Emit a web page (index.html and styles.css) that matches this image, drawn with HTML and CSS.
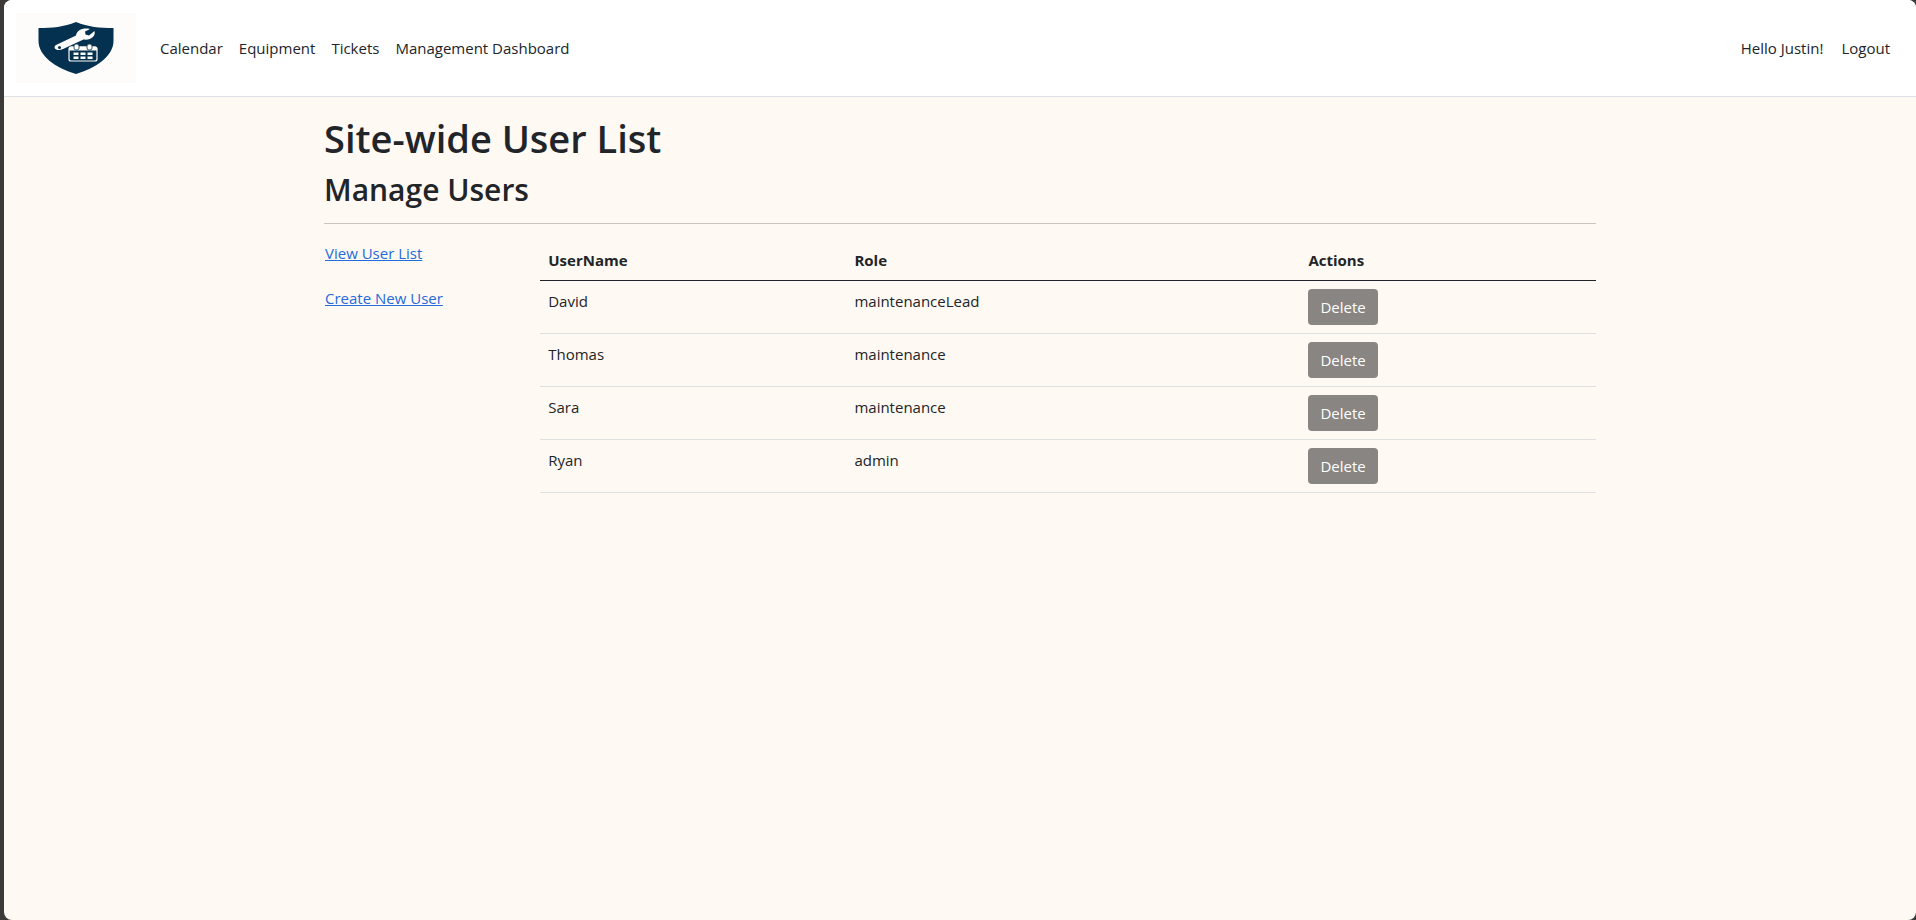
FILE: index.html
```html
<!DOCTYPE html>
<html lang="en">
<head>
  <meta charset="utf-8">
  <title>Site-wide User List</title>
  <link rel="stylesheet" href="styles.css">
</head>
<body>
  <div class="page">
    <header class="navbar">
      <a class="brand" href="#" aria-label="Home">
        <svg class="logo" viewBox="0 0 120 70" aria-hidden="true">
          <path fill="#04314f" d="M60 9C72 14 84 15 97.500 15V28C97.500 43 80 55 60 61C40 55 22.500 43 22.500 28V15C36 15 48 14 60 9Z"/>
          <path fill="#fdfcfa" d="M40 32L60 22.500C61 17 67 14.500 74 16L69 18.500L69.500 21.500L73 22.500L78.500 18C80 23 75 27.500 67.500 26.500L47 36C41 39 36 35 40 32Z"/>
          <circle cx="43.500" cy="34.500" r="1.500" fill="#04314f"/>
          <rect x="53" y="34" width="28" height="14" rx="2" fill="#04314f" stroke="#fdfcfa" stroke-width="1.200"/>
          <path fill="#fdfcfa" d="M53 37.500V35Q53 33.500 55 33.500H79Q81 33.500 81 35V37.500Z"/>
          <rect x="58" y="31" width="5" height="6" rx="2" fill="#fdfcfa" stroke="#04314f" stroke-width=".8"/>
          <rect x="71" y="31" width="5" height="6" rx="2" fill="#fdfcfa" stroke="#04314f" stroke-width=".8"/>
          <path fill="#fdfcfa" d="M57.500 39.500h5v2.500h-5zM64.500 39.500h5v2.500h-5zM71.500 39.500h5v2.500h-5zM57.500 43.500h5v2.500h-5zM64.500 43.500h5v2.500h-5zM71.500 43.500h5v2.500h-5z"/>
        </svg>
      </a>
      <nav class="nav-links" aria-label="Main">
        <a href="#">Calendar</a>
        <a href="#">Equipment</a>
        <a href="#">Tickets</a>
        <a href="#">Management Dashboard</a>
      </nav>
      <div class="account">
        <span>Hello Justin!</span>
        <a href="#">Logout</a>
      </div>
    </header>
    <main class="container">
      <h1>Site-wide User List</h1>
      <h2>Manage Users</h2>
      <hr>
      <div class="columns">
        <nav class="side-links" aria-label="Users">
          <a href="#">View User List</a>
          <a href="#">Create New User</a>
        </nav>
        <table class="users">
          <thead>
            <tr><th class="col-name" scope="col">UserName</th><th class="col-role" scope="col">Role</th><th scope="col">Actions</th></tr>
          </thead>
          <tbody>
            <tr><td>David</td><td>maintenanceLead</td><td><button type="button">Delete</button></td></tr>
            <tr><td>Thomas</td><td>maintenance</td><td><button type="button">Delete</button></td></tr>
            <tr><td>Sara</td><td>maintenance</td><td><button type="button">Delete</button></td></tr>
            <tr><td>Ryan</td><td>admin</td><td><button type="button">Delete</button></td></tr>
          </tbody>
        </table>
      </div>
    </main>
  </div>
</body>
</html>
```
FILE: styles.css
```css
* {
  box-sizing: border-box;
}

body {
  margin: 0;
  padding-left: 4px;
  background: #3b3a38;
  color: #212529;
  font-family: "Segoe UI", "Open Sans", "Noto Sans", sans-serif;
  font-size: 15px;
  line-height: 24px;
}

.page {
  min-height: 100vh;
  overflow: hidden;
  border-radius: 8px;
  background: #fff9f3;
}

.navbar {
  display: flex;
  align-items: center;
  padding: 13px 18px 13px 12px;
  border-bottom: 1px solid #dee2e6;
  background: #fff;
}

.brand {
  display: block;
  margin-right: 16px;
  background: #fdfcfa;
}

.logo {
  display: block;
  width: 120px;
  height: 70px;
}

.nav-links {
  display: flex;
}

.nav-links a,
.account a {
  padding: 8px;
  color: inherit;
  text-decoration: none;
}

.account {
  display: flex;
  align-items: center;
  gap: 10px;
  margin-left: auto;
}

.container {
  max-width: 1320px;
  margin: 0 auto;
  padding: 18px 24px 24px;
}

h1,
h2 {
  margin: 0;
  font-weight: 600;
}

h1 {
  margin-bottom: 10px;
  font-size: 38px;
  line-height: 46px;
}

h2 {
  font-size: 30px;
  line-height: 38px;
}

hr {
  margin: 14px 0 16px;
  border: 0;
  border-top: 1px solid #c8c4c0;
}

.columns {
  display: grid;
  grid-template-columns: 17fr 83fr;
}

.side-links {
  display: flex;
  flex-direction: column;
  align-items: flex-start;
  gap: 21px;
  padding: 1px 0 0 1px;
}

.side-links a {
  color: #246bdb;
}

.users {
  width: 100%;
  border-collapse: separate;
  border-spacing: 0;
  table-layout: fixed;
}

.users th,
.users td {
  padding: 8px;
  border-bottom: 1px solid #dee0e1;
  text-align: left;
  vertical-align: top;
}

.users th {
  border-color: #212529;
  font-weight: 700;
}

.col-name {
  width: 29%;
}

.col-role {
  width: 43%;
}

.users button {
  display: block;
  padding: 6px 12px;
  border: 0;
  border-radius: 4px;
  background: #888582;
  color: #fff;
  font: inherit;
}
```
